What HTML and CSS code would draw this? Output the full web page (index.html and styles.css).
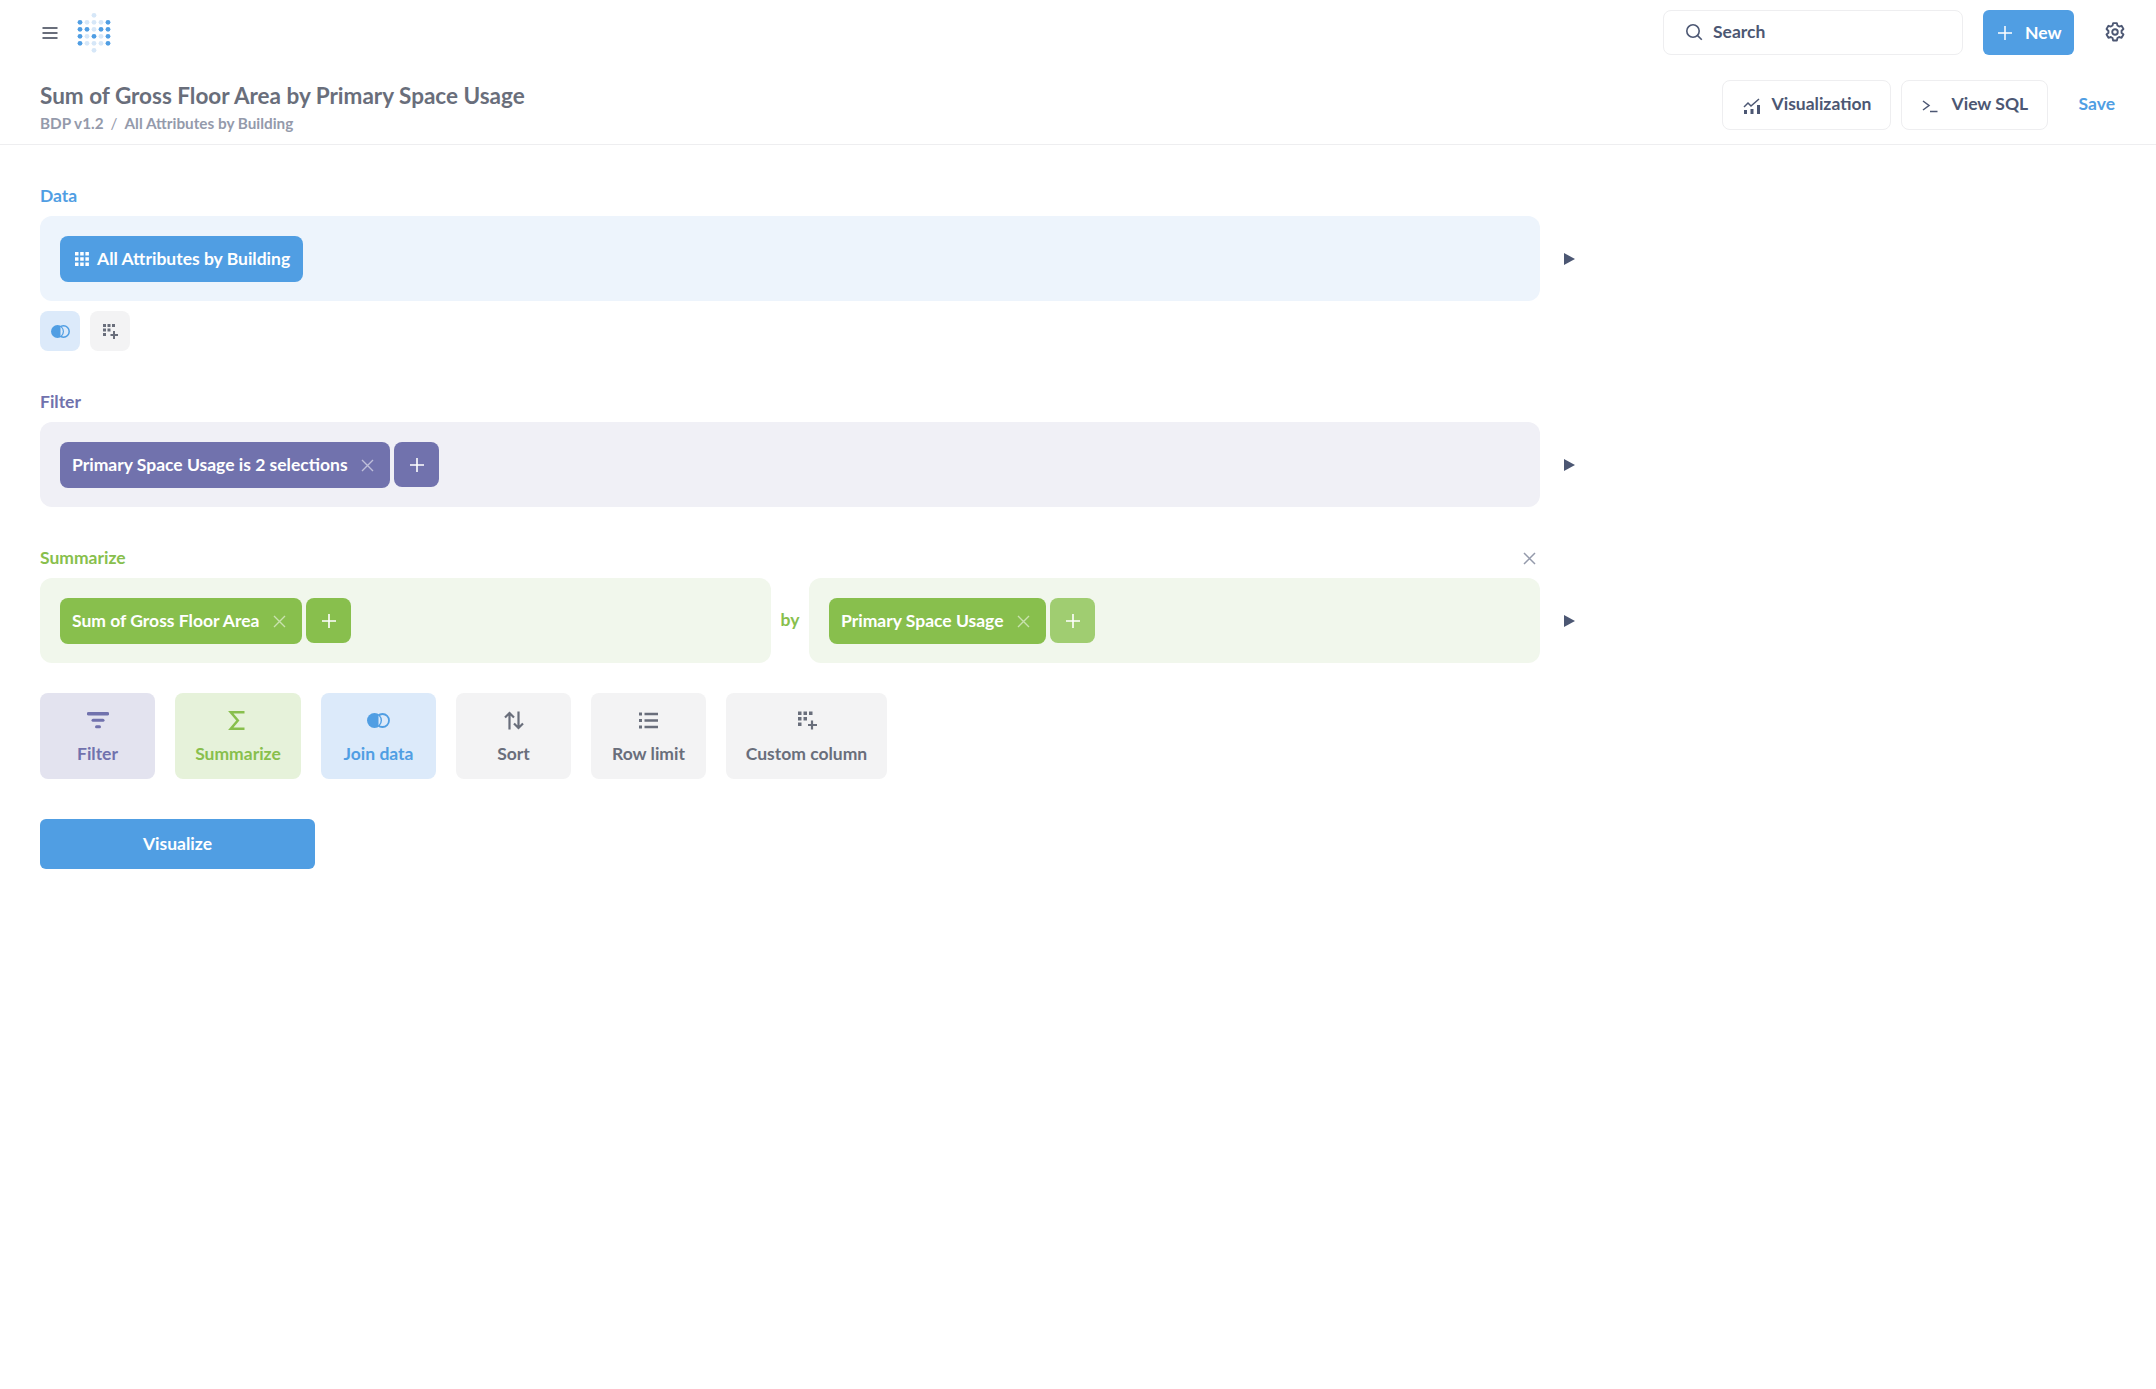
FILE: index.html
```html
<!DOCTYPE html>
<html lang="en">
<head>
<meta charset="utf-8">
<title>Sum of Gross Floor Area by Primary Space Usage</title>
<link rel="stylesheet" href="styles.css">
</head>
<body>
<header class="header">
  <div class="topbar">
    <div class="top-left">
      <svg class="menu-icon" width="16" height="16" viewBox="0 0 16 16"><path d="M.5 3h15M.5 8h15M.5 13h15" stroke="#696e7b" stroke-width="2.200" fill="none"/></svg>
      <svg class="logo" width="36" height="44" viewBox="0 0 36 44">
        <g fill="#d6e7f8"><circle cx="18" cy="4.300" r="2.400"/><circle cx="18" cy="39.300" r="2.400"/><circle cx="11" cy="11.300" r="2.400"/><circle cx="18" cy="11.300" r="2.400"/><circle cx="25" cy="11.300" r="2.400"/><circle cx="18" cy="18.300" r="2.400"/><circle cx="11" cy="25.300" r="2.400"/><circle cx="25" cy="25.300" r="2.400"/><circle cx="11" cy="32.300" r="2.400"/><circle cx="18" cy="32.300" r="2.400"/><circle cx="25" cy="32.300" r="2.400"/></g>
        <g fill="#509ee3"><circle cx="4" cy="11.300" r="2.400"/><circle cx="32" cy="11.300" r="2.400"/><circle cx="4" cy="18.300" r="2.400"/><circle cx="11" cy="18.300" r="2.400"/><circle cx="25" cy="18.300" r="2.400"/><circle cx="32" cy="18.300" r="2.400"/><circle cx="4" cy="25.300" r="2.400"/><circle cx="18" cy="25.300" r="2.400"/><circle cx="32" cy="25.300" r="2.400"/><circle cx="4" cy="32.300" r="2.400"/><circle cx="32" cy="32.300" r="2.400"/></g>
      </svg>
    </div>
    <div class="top-right">
      <div class="search">
        <svg width="18" height="18" viewBox="0 0 18 18"><circle cx="8" cy="8" r="6.200" stroke="#4c5773" stroke-width="1.600" fill="none"/><path d="M12.600 12.600L16.800 16.800" stroke="#4c5773" stroke-width="1.600" fill="none"/></svg>
        <span>Search</span>
      </div>
      <button class="new-btn">
        <svg width="14" height="14" viewBox="0 0 14 14"><path d="M7 0v14M0 7h14" stroke="#fff" stroke-width="1.500"/></svg>
        <span>New</span>
      </button>
      <svg class="gear" width="20" height="20" viewBox="0 0 18 18"><path d="M7.300 1h3.400l.5 2.200 1.500.9 2.200-.7 1.700 2.900-1.700 1.600v1.800l1.700 1.600-1.700 2.900-2.200-.7-1.500.9-.5 2.200H7.300l-.5-2.200-1.500-.9-2.200.7-1.700-2.900 1.700-1.600V8.100L1.400 6.300l1.700-2.900 2.200.7 1.500-.9z" stroke="#4c5773" stroke-width="1.700" stroke-linejoin="round" fill="none"/><circle cx="9" cy="9" r="2.500" stroke="#4c5773" stroke-width="1.700" fill="none"/></svg>
    </div>
  </div>
  <div class="titlebar">
    <div>
      <h1 class="title">Sum of Gross Floor Area by Primary Space Usage</h1>
      <div class="crumbs"><span>BDP v1.2</span><span class="slash">/</span><span>All Attributes by Building</span></div>
    </div>
    <div class="title-actions">
      <button class="outline-btn viz-btn">
        <svg width="18" height="16" viewBox="0 0 18 16"><path d="M1 9l4-4 3 3 8-7" stroke="#4c5773" stroke-width="1.500" fill="none"/><path d="M1 12h3v4H1zM7.500 11h3v5h-3zM14 7h3v9h-3z" fill="#4c5773"/></svg>
        <span>Visualization</span>
      </button>
      <button class="outline-btn sql-btn">
        <svg width="16" height="14" viewBox="0 0 16 14"><path d="M1 2l6 4.500-6 4.500" stroke="#4c5773" stroke-width="1.500" fill="none"/><path d="M8 12.500h7.500" stroke="#4c5773" stroke-width="1.500"/></svg>
        <span>View SQL</span>
      </button>
      <span class="save">Save</span>
    </div>
  </div>
</header>

<main class="editor">
  <section class="step step-data">
    <div class="step-label data-text">Data</div>
    <div class="step-row">
      <div class="block data-bg">
        <div class="chip blue-chip">
          <svg width="14" height="14" viewBox="0 0 14 14" fill="#fff"><path d="M0 0h3.500v3.500H0zM5.200 0h3.500v3.500H5.200zM10.400 0h3.500v3.500h-3.500zM0 5.200h3.500v3.500H0zM5.200 5.200h3.500v3.500H5.200zM10.400 5.200h3.500v3.500h-3.500zM0 10.400h3.500v3.500H0zM5.200 10.400h3.500v3.500H5.200zM10.400 10.400h3.500v3.500h-3.500z"/></svg>
          <span>All Attributes by Building</span>
        </div>
      </div>
      <svg class="arrow" width="11" height="12" viewBox="0 0 11 12"><path d="M0 0l11 6-11 6z" fill="#4c5773"/></svg>
    </div>
    <div class="mini-actions">
      <span class="mini tint-blue">
        <svg width="19" height="13" viewBox="0 0 19 13"><circle cx="6.500" cy="6.500" r="6.500" fill="#509ee3"/><circle cx="12.500" cy="6.500" r="5.700" stroke="#509ee3" stroke-width="1.500" fill="none"/><path d="M9.500 1.800a6 6 0 0 1 0 9.400z" fill="#dceafa"/></svg>
      </span>
      <span class="mini tint-grey">
        <svg class="mini-custom" width="16" height="15" viewBox="0 0 16 15"><path d="M0 0h3v3H0zM4.500 0h3v3h-3zM9 0h3v3H9zM0 4.500h3v3H0zM4.500 4.500h3v3h-3zM0 9h3v3H0z" fill="#696e7b"/><path d="M11 7v8M7.500 11h7.500" stroke="#696e7b" stroke-width="2"/></svg>
      </span>
    </div>
  </section>

  <section class="step step-filter">
    <div class="step-label filter-text">Filter</div>
    <div class="step-row">
      <div class="block filter-bg">
        <div class="chip purple-chip with-x">
          <span>Primary Space Usage is 2 selections</span>
          <svg class="x" width="13" height="13" viewBox="0 0 13 13"><path d="M1 1l11 11M12 1L1 12" stroke="#fff" stroke-opacity=".55" stroke-width="1.400"/></svg>
        </div>
        <span class="plus purple-chip"><svg width="14" height="14" viewBox="0 0 14 14"><path d="M7 0v14M0 7h14" stroke="#fff" stroke-width="1.600"/></svg></span>
      </div>
      <svg class="arrow" width="11" height="12" viewBox="0 0 11 12"><path d="M0 0l11 6-11 6z" fill="#4c5773"/></svg>
    </div>
  </section>

  <section class="step step-sum">
    <div class="label-row">
      <div class="step-label sum-text">Summarize</div>
      <svg class="close" width="13" height="13" viewBox="0 0 13 13"><path d="M1 1l11 11M12 1L1 12" stroke="#949aab" stroke-width="1.500"/></svg>
    </div>
    <div class="step-row">
      <div class="sum-blocks">
        <div class="block sum-bg half">
          <div class="chip green-chip with-x">
            <span>Sum of Gross Floor Area</span>
            <svg class="x" width="13" height="13" viewBox="0 0 13 13"><path d="M1 1l11 11M12 1L1 12" stroke="#fff" stroke-opacity=".55" stroke-width="1.400"/></svg>
          </div>
          <span class="plus green-chip"><svg width="14" height="14" viewBox="0 0 14 14"><path d="M7 0v14M0 7h14" stroke="#fff" stroke-width="1.600"/></svg></span>
        </div>
        <span class="by sum-text">by</span>
        <div class="block sum-bg half">
          <div class="chip green-chip with-x">
            <span>Primary Space Usage</span>
            <svg class="x" width="13" height="13" viewBox="0 0 13 13"><path d="M1 1l11 11M12 1L1 12" stroke="#fff" stroke-opacity=".55" stroke-width="1.400"/></svg>
          </div>
          <span class="plus green-soft"><svg width="14" height="14" viewBox="0 0 14 14"><path d="M7 0v14M0 7h14" stroke="#fff" stroke-width="1.600"/></svg></span>
        </div>
      </div>
      <svg class="arrow" width="11" height="12" viewBox="0 0 11 12"><path d="M0 0l11 6-11 6z" fill="#4c5773"/></svg>
    </div>
  </section>

  <div class="actions">
    <button class="action tint-purple filter-text w-115">
      <svg width="22" height="17" viewBox="0 0 22 17"><path d="M1.500 1.700h19" stroke="#7172ad" stroke-width="3.400" stroke-linecap="round"/><path d="M6 8.200h10" stroke="#7172ad" stroke-width="3" stroke-linecap="round"/><path d="M9.500 14.700h3" stroke="#7172ad" stroke-width="3" stroke-linecap="round"/></svg>
      <span>Filter</span>
    </button>
    <button class="action tint-green sum-text w-126">
      <svg class="sigma" width="17" height="19" viewBox="0 0 17 19"><path d="M16.500 1.300H2.800L9.800 9.500l-7 8.200h13.700" stroke="#88bf4d" stroke-width="2.500" fill="none"/></svg>
      <span>Summarize</span>
    </button>
    <button class="action tint-blue data-text w-115">
      <svg width="23" height="15" viewBox="0 0 23 15"><circle cx="7.500" cy="7.500" r="7.500" fill="#509ee3"/><circle cx="15.500" cy="7.500" r="6.500" stroke="#509ee3" stroke-width="1.800" fill="none"/><path d="M11.500 2.500a7 7 0 0 1 0 10z" fill="#dceafa"/></svg>
      <span>Join data</span>
    </button>
    <button class="action tint-grey grey-text w-115">
      <svg width="20" height="18" viewBox="0 0 20 18"><path d="M5.500 18V2M1 6l4.500-4.500L10 6" stroke="#696e7b" stroke-width="2.200" fill="none"/><path d="M14.500 0v16M10 12l4.500 4.500L19 12" stroke="#696e7b" stroke-width="2.200" fill="none"/></svg>
      <span>Sort</span>
    </button>
    <button class="action tint-grey grey-text w-115">
      <svg width="19" height="16" viewBox="0 0 19 16"><path d="M0 0h3v3H0zM0 6.500h3v3H0zM0 13h3v3H0z" fill="#696e7b"/><path d="M5.500 1.500H19M5.500 8H19M5.500 14.500H19" stroke="#696e7b" stroke-width="2.400"/></svg>
      <span>Row limit</span>
    </button>
    <button class="action tint-grey grey-text w-161">
      <svg class="custom-icon" width="19" height="18" viewBox="0 0 19 18"><path d="M0 0h3.500v3.500H0zM5.500 0H9v3.500H5.500zM11 0h3.500v3.500H11zM0 5.500h3.500V9H0zM5.500 5.500H9V9H5.500zM0 11h3.500v3.500H0z" fill="#696e7b"/><path d="M14 9v9M10 13.500h9" stroke="#696e7b" stroke-width="2.200"/></svg>
      <span>Custom column</span>
    </button>
  </div>

  <button class="visualize">Visualize</button>
</main>
</body>
</html>
```

FILE: styles.css
```css
* { box-sizing: border-box; }

html, body { margin: 0; padding: 0; }

body {
  background: #fff;
  color: #4c5773;
  font-family: Lato, "Open Sans", sans-serif;
  font-weight: 700;
  font-size: 17.5px;
}

button {
  font: inherit;
  border: 0;
  background: none;
  padding: 0;
  margin: 0;
  cursor: pointer;
}

svg { display: block; flex: none; }

/* Header */
.header {
  height: 145px;
  border-bottom: 1px solid #eeeef0;
}

.topbar {
  display: flex;
  justify-content: space-between;
  align-items: center;
  height: 65px;
  padding: 0 31px 0 41px;
}

.top-left {
  display: flex;
  align-items: center;
  gap: 18px;
}

.menu-icon { margin-left: 1px; }

.top-right {
  display: flex;
  align-items: center;
}

.search {
  width: 300px;
  height: 45px;
  display: flex;
  align-items: center;
  gap: 10px;
  padding: 0 0 2px 21px;
  border: 1px solid #eeeef0;
  border-radius: 8px;
}

.new-btn {
  width: 91px;
  height: 45px;
  margin-left: 20px;
  display: flex;
  align-items: center;
  gap: 13px;
  padding-left: 15px;
  background: #509ee3;
  color: #fff;
  border-radius: 6px;
}

.gear { margin-left: 31px; margin-top: -2px; }

.titlebar {
  display: flex;
  justify-content: space-between;
  align-items: flex-start;
  padding: 15px 41px 0 40px;
}

.title {
  margin: 0;
  font-size: 22.5px;
  line-height: 32px;
  font-weight: 700;
  color: #696e7b;
}

.crumbs {
  display: flex;
  font-size: 15.3px;
  line-height: 18px;
  margin-top: 2px;
  color: #949aab;
}

.slash { margin: 0 7px; font-weight: 400; }

.title-actions {
  display: flex;
  align-items: center;
  height: 50px;
}

.outline-btn {
  height: 50px;
  display: flex;
  align-items: center;
  border: 1px solid #eeeef0;
  border-radius: 8px;
  color: #4c5773;
}

.outline-btn span { margin-bottom: 3px; }

.outline-btn svg { margin-bottom: -1px; }

.viz-btn { width: 169px; gap: 11px; padding-left: 20px; }

.sql-btn { width: 147px; margin-left: 10px; gap: 14px; padding-left: 20px; }

.save {
  margin-left: 31px;
  margin-bottom: 3px;
  color: #509ee3;
}

/* Editor */
.editor {
  padding: 41px 0 0 40px;
}

.step-label {
  line-height: 20px;
}

.step-row {
  display: flex;
  align-items: center;
  margin-top: 10px;
}

.block {
  display: flex;
  align-items: flex-start;
  gap: 4px;
  width: 1500px;
  height: 85px;
  padding: 20px;
  border-radius: 12px;
}

.arrow { margin-left: 24px; }

.chip {
  height: 46px;
  display: flex;
  align-items: center;
  border-radius: 8px;
  color: #fff;
}

.chip span { margin-bottom: 1px; }

.blue-chip {
  width: 243px;
  gap: 8px;
  padding-left: 15px;
  background: #509ee3;
}

.with-x { padding: 0 16px 0 12px; justify-content: space-between; }

.purple-chip { background: #7172ad; }

.green-chip { background: #88bf4d; }

.green-soft { background: #a0cd71; }

.step-filter .chip { width: 330px; }

.half:first-child .chip { width: 242px; }

.half:last-child .chip { width: 217px; }

.plus {
  width: 45px;
  height: 45px;
  display: flex;
  align-items: center;
  justify-content: center;
  border-radius: 8px;
}

.data-bg { background: #edf4fc; }
.filter-bg { background: #f0f0f6; }
.sum-bg { background: #f1f7ec; }

.data-text { color: #509ee3; }
.filter-text { color: #7172ad; }
.sum-text { color: #88bf4d; }
.grey-text { color: #696e7b; }

.mini-actions {
  display: flex;
  gap: 10px;
  margin-top: 10px;
}

.mini {
  width: 40px;
  height: 40px;
  display: flex;
  align-items: center;
  justify-content: center;
  border-radius: 8px;
}

.mini-custom { margin-left: 2px; }

.tint-blue { background: #dceafa; }
.tint-grey { background: #f3f3f4; }
.tint-purple { background: #e3e3ef; }
.tint-green { background: #e6f2da; }

.step-filter { margin-top: 41px; }

.step-sum { margin-top: 41px; }

.label-row {
  display: flex;
  align-items: center;
  justify-content: space-between;
  width: 1495px;
}

.close { margin-right: -1px; }

.sum-blocks {
  display: flex;
  align-items: center;
  width: 1500px;
}

.half { width: 731px; }

.by {
  width: 38px;
  text-align: center;
  margin-bottom: 2px;
}

.actions {
  display: flex;
  gap: 20px;
  margin-top: 30px;
}

.action {
  height: 86px;
  display: flex;
  flex-direction: column;
  align-items: center;
  justify-content: flex-start;
  padding-top: 18px;
  border-radius: 8px;
}

.action svg { height: 19px; }

.sigma { margin-left: -3px; }

.custom-icon { margin-left: 2px; }

.action span { margin-top: 14px; line-height: 20px; }

.w-115 { width: 115px; }
.w-126 { width: 126px; }
.w-161 { width: 161px; }

.visualize {
  display: block;
  width: 275px;
  height: 50px;
  margin-top: 40px;
  padding-bottom: 2px;
  background: #509ee3;
  color: #fff;
  border-radius: 6px;
}
```
